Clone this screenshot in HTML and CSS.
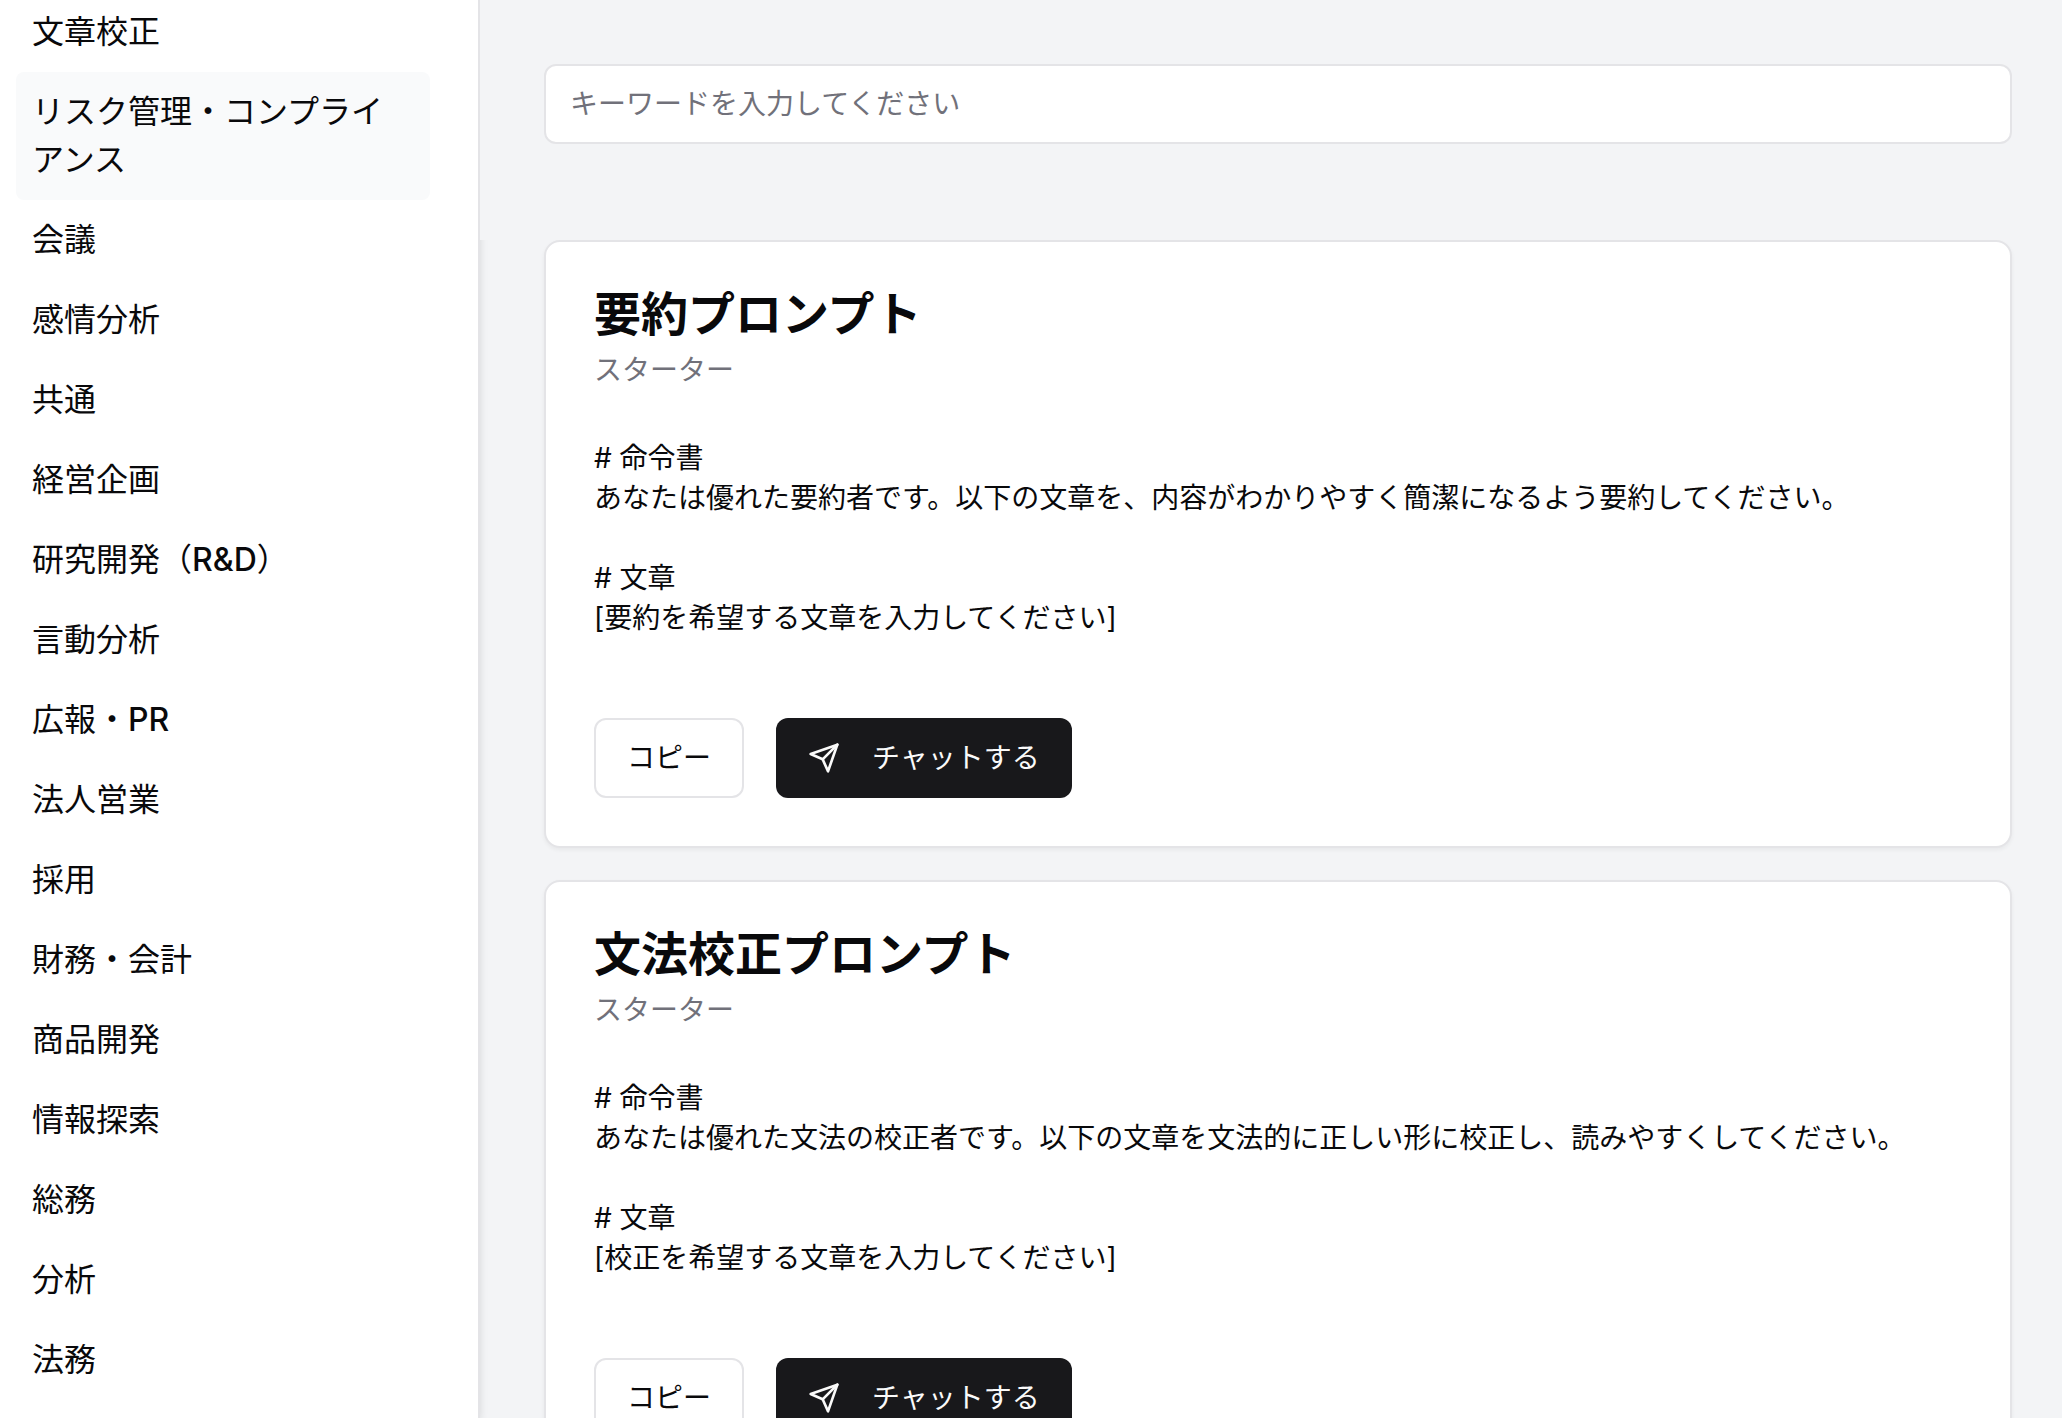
FILE: index.html
```html
<!DOCTYPE html>
<html lang="ja">
<head>
  <meta charset="utf-8">
  <meta name="viewport" content="width=device-width, initial-scale=1">
  <title>プロンプト一覧</title>
  <link rel="stylesheet" href="styles.css">
</head>
<body>
  <div class="layout">
    <nav class="sidebar" aria-label="カテゴリー">
      <ul class="category-list">
        <li><a class="category" href="#">文章校正</a></li>
        <li><a class="category category-active" href="#">リスク管理・コンプライアンス</a></li>
        <li><a class="category" href="#">会議</a></li>
        <li><a class="category" href="#">感情分析</a></li>
        <li><a class="category" href="#">共通</a></li>
        <li><a class="category" href="#">経営企画</a></li>
        <li><a class="category" href="#">研究開発（<span class="latin">R&amp;D</span>）</a></li>
        <li><a class="category" href="#">言動分析</a></li>
        <li><a class="category" href="#">広報・<span class="latin">PR</span></a></li>
        <li><a class="category" href="#">法人営業</a></li>
        <li><a class="category" href="#">採用</a></li>
        <li><a class="category" href="#">財務・会計</a></li>
        <li><a class="category" href="#">商品開発</a></li>
        <li><a class="category" href="#">情報探索</a></li>
        <li><a class="category" href="#">総務</a></li>
        <li><a class="category" href="#">分析</a></li>
        <li><a class="category" href="#">法務</a></li>
      </ul>
    </nav>

    <main class="content">
      <form class="search">
        <input class="search-input" type="search" aria-label="キーワード" placeholder="キーワードを入力してください">
      </form>

      <div class="cards">
        <article class="card">
          <header class="card-header">
            <h2 class="card-title">要約プロンプト</h2>
            <p class="card-subtitle">スターター</p>
          </header>
          <p class="card-body"># 命令書
あなたは優れた要約者です。以下の文章を、内容がわかりやすく簡潔になるよう要約してください。

# 文章
[要約を希望する文章を入力してください]</p>
          <footer class="card-actions">
            <button class="button button-outline" type="button">コピー</button>
            <button class="button button-primary" type="button">
              <svg class="icon" viewBox="0 0 24 24" aria-hidden="true"><path d="m22 2-7 20-4-9-9-4Z"/><path d="M22 2 11 13"/></svg>
              チャットする
            </button>
          </footer>
        </article>

        <article class="card">
          <header class="card-header">
            <h2 class="card-title">文法校正プロンプト</h2>
            <p class="card-subtitle">スターター</p>
          </header>
          <p class="card-body"># 命令書
あなたは優れた文法の校正者です。以下の文章を文法的に正しい形に校正し、読みやすくしてください。

# 文章
[校正を希望する文章を入力してください]</p>
          <footer class="card-actions">
            <button class="button button-outline" type="button">コピー</button>
            <button class="button button-primary" type="button">
              <svg class="icon" viewBox="0 0 24 24" aria-hidden="true"><path d="m22 2-7 20-4-9-9-4Z"/><path d="M22 2 11 13"/></svg>
              チャットする
            </button>
          </footer>
        </article>
      </div>
    </main>
  </div>
</body>
</html>
```

FILE: styles.css
```css
* {
  box-sizing: border-box;
}

body {
  margin: 0;
  background: #f3f4f6;
  color: #09090b;
  font-family: Inter, "Noto Sans CJK JP", sans-serif;
  font-size: 28px;
  line-height: 40px;
}

.layout {
  display: flex;
  height: 100vh;
  overflow: hidden;
}

/* Category navigation */
.sidebar {
  position: relative;
  z-index: 1;
  flex: none;
  width: 480px;
  padding: 0 48px 0 16px;
  border-right: 2px solid #e4e4e7;
  background: #fff;
  box-shadow: 0 2px 8px rgba(0, 0, 0, 0.12);
}

.category-list {
  margin: -8px 0 0;
  padding: 0;
  list-style: none;
}

.category {
  display: block;
  padding: 16px;
  border-radius: 8px;
  color: inherit;
  font-size: 32px;
  line-height: 48px;
  text-decoration: none;
}

.category-active {
  background: #f9fafb;
}

.latin {
  font-weight: 500;
}

/* Main column */
.content {
  flex: 1;
  min-width: 0;
  overflow-y: auto;
  scrollbar-width: none;
}

.search {
  position: relative;
  z-index: 2;
  padding: 64px 50px 96px 64px;
  background: #f3f4f6;
}

.search-input {
  display: block;
  width: 100%;
  height: 80px;
  padding: 0 24px;
  border: 2px solid #e4e4e7;
  border-radius: 12px;
  background: #fff;
  color: inherit;
  font: inherit;
  appearance: none;
}

.search-input::placeholder {
  color: #71717a;
  opacity: 1;
}

.cards {
  display: flex;
  flex-direction: column;
  gap: 32px;
  padding: 0 50px 64px 64px;
}

.card {
  padding: 48px;
  border: 2px solid #e4e4e7;
  border-radius: 16px;
  background: #fff;
  box-shadow: 0 2px 4px rgba(0, 0, 0, 0.05);
}

.card-header {
  display: flex;
  flex-direction: column;
  gap: 12px;
}

.card-title {
  margin: 0;
  font-size: 47px;
  font-weight: 700;
  line-height: 48px;
}

.card-subtitle {
  margin: 0;
  color: #71717a;
}

.card-body {
  margin: 48px 0 80px;
  white-space: pre-wrap;
}

.card-actions {
  display: flex;
  gap: 32px;
}

.button {
  display: inline-flex;
  align-items: center;
  gap: 32px;
  height: 80px;
  border: 0;
  border-radius: 12px;
  font: inherit;
}

.button-outline {
  padding: 0 31px;
  border: 2px solid #e4e4e7;
  background: #fff;
  color: #09090b;
}

.button-primary {
  padding: 0 32px;
  background: #18181b;
  color: #fafafa;
}

.icon {
  width: 32px;
  height: 32px;
  fill: none;
  stroke: currentColor;
  stroke-width: 2;
  stroke-linecap: round;
  stroke-linejoin: round;
}
```
